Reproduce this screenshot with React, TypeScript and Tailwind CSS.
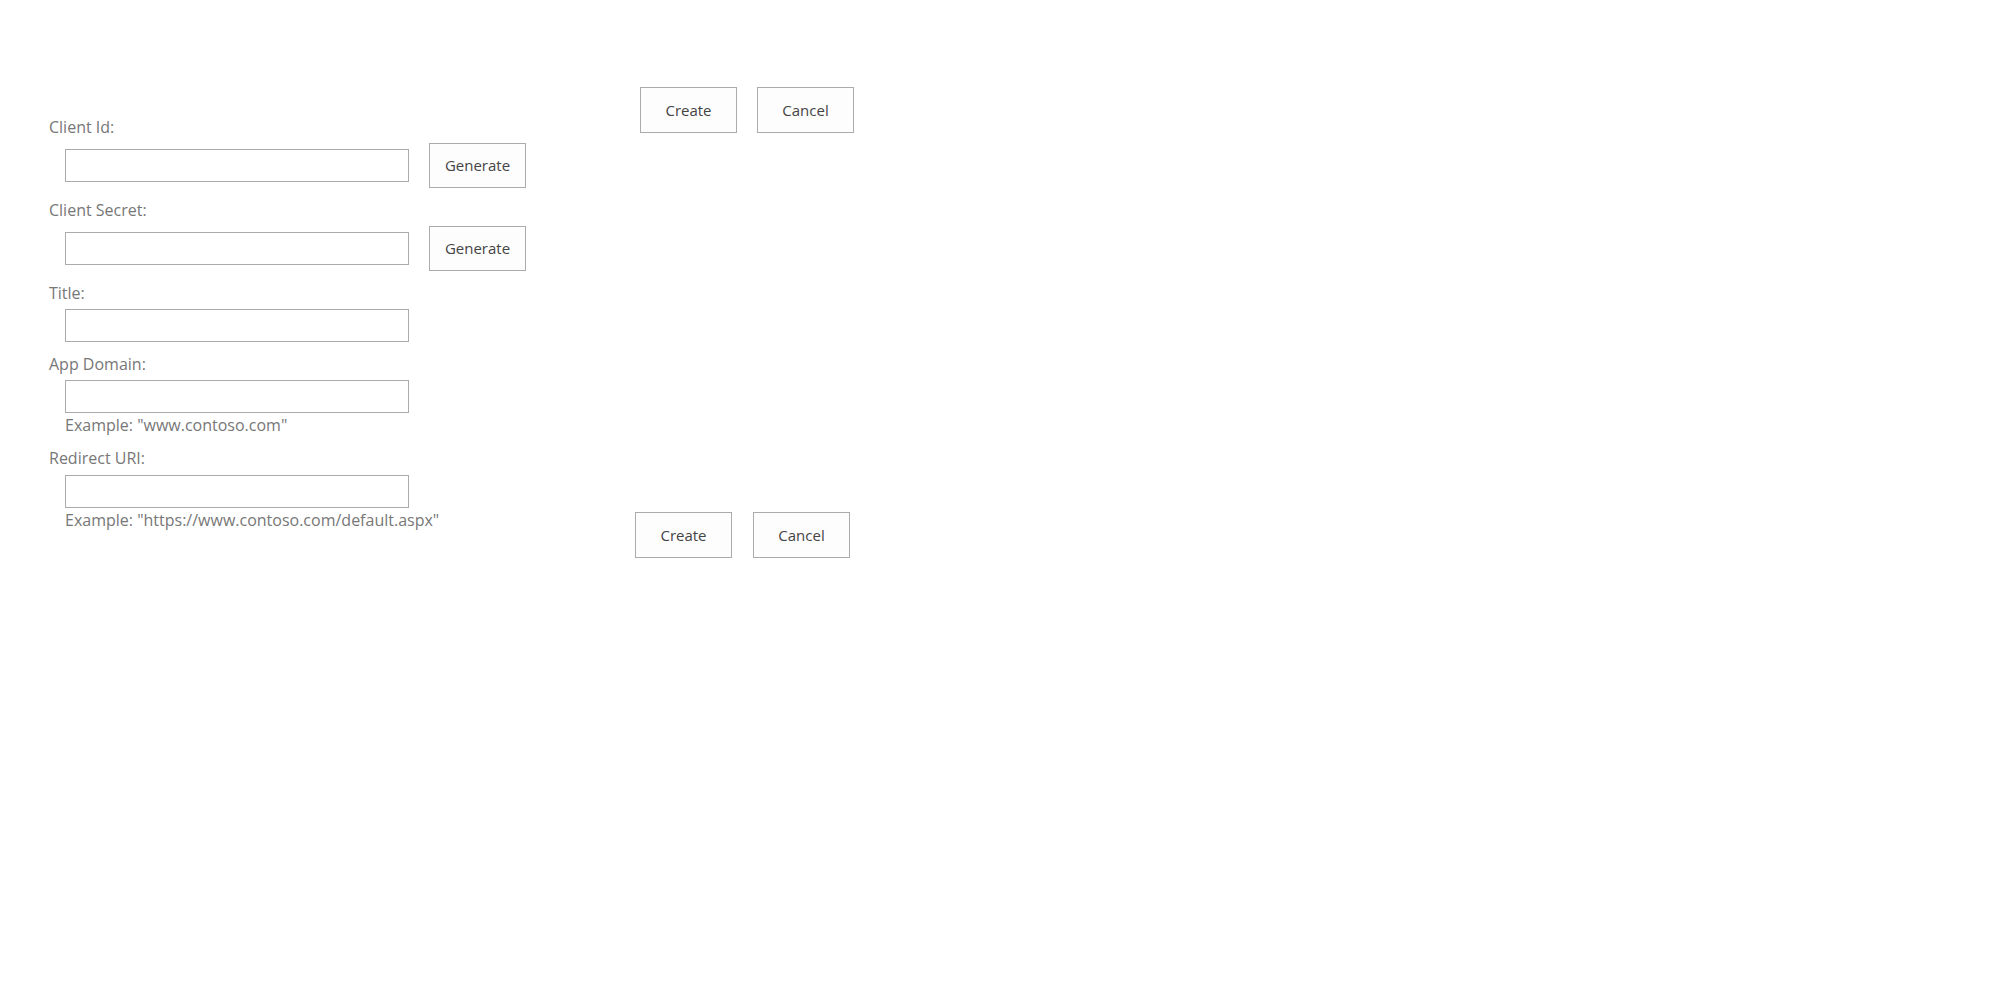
import React from 'react';

const btn =
  "h-[46px] w-[97px] border border-[#ababab] bg-[#fdfdfd] text-[15px] text-[#444] flex items-center justify-center";

const genBtn = "h-[45px] w-[97px] border border-[#ababab] bg-[#fdfdfd] text-[15px] text-[#444]";

const Label = ({ children, mt = 'mt-[11px]', mb = 'mb-[5px]' }: { children: React.ReactNode; mt?: string; mb?: string }) => (
  <div className={`${mt} ${mb} leading-[22px] text-[#777]`}>{children}</div>
);

const Field = () => <input type="text" className="ml-4 h-[33px] w-[344px] border border-[#ababab] bg-white outline-none" />;

const Example = ({ text }: { text: string }) => (
  <div className="ml-4 mt-[1px] leading-[22px] text-[#777]">{text}</div>
);

const ButtonPair = ({ className }: { className: string }) => (
  <div className={`flex ${className}`}>
    <button className={btn}>Create</button>
    <button className={btn}>Cancel</button>
  </div>
);

export default function App() {
  return (
    <div className="min-h-screen bg-white font-['Open_Sans',sans-serif] text-[16px]">
      <div className="flex pl-[49px] pt-[87px]">
        {/* form */}
        <div className="w-[586px] pt-[29px] pb-[27px]">
          <Label mt="mt-0">Client Id:</Label>
          <div className="flex items-center gap-5">
            <Field />
            <button className={genBtn}>Generate</button>
          </div>
          <Label>Client Secret:</Label>
          <div className="flex items-center gap-5">
            <Field />
            <button className={genBtn}>Generate</button>
          </div>
          <Label>Title:</Label>
          <Field />
          <Label>App Domain:</Label>
          <Field />
          <Example text={'Example: "www.contoso.com"'} />
          <Label mb="mb-[6px]">Redirect URI:</Label>
          <Field />
          <Example text={'Example: "https://www.contoso.com/default.aspx"'} />
        </div>

        {/* actions */}
        <div className="flex flex-col justify-between">
          <ButtonPair className="ml-[5px] gap-5" />
          <ButtonPair className="gap-[21px]" />
        </div>
      </div>
    </div>
  );
}
